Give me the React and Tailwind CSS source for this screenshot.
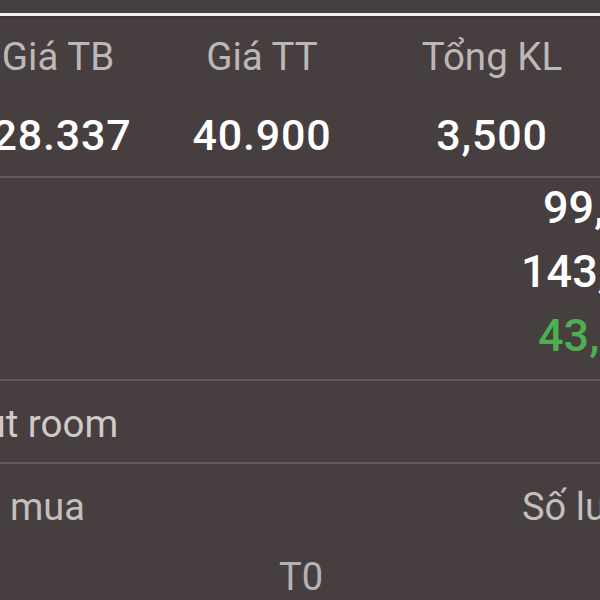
export default function App() {
  const font = { fontFamily: "Roboto, 'Noto Sans', sans-serif" };
  return (
    <div
      className="w-[600px] h-[600px] overflow-hidden bg-[#463e3f] relative"
      style={font}
    >
      <div className="h-[13px]" />
      <div className="h-[3px] bg-[#f2f0f0]" />
      <div className="h-[3px] bg-[#3f3838]" />
      {/* header */}
      <div className="flex mt-[16px] text-[38.5px] leading-[44px] text-[#bdb8b8] whitespace-nowrap">
        <div className="w-[116px] shrink-0 flex justify-center">Giá TB</div>
        <div className="w-[292px] shrink-0 flex justify-center">Giá TT</div>
        <div className="w-[168px] shrink-0 flex justify-center">Tổng KL</div>
      </div>
      <div className="flex mt-[31px] text-[43px] leading-[50px] tracking-[0.8px] font-medium text-white whitespace-nowrap">
        <div className="w-[124px] shrink-0 flex justify-center">28.337</div>
        <div className="w-[276px] shrink-0 flex justify-center">40.900</div>
        <div className="w-[184px] shrink-0 flex justify-center">3,500</div>
      </div>
      <div className="mt-[16px] h-[2px] bg-[#615a5a]" />
      <div className="mt-[3px] flex flex-col gap-[10px] text-[45px] leading-[54px] font-medium whitespace-nowrap">
        <div className="pl-[543px] text-white">99,000,000</div>
        <div className="pl-[521px] text-white">143,000,000</div>
        <div className="pl-[538px] text-[#4caf50]">43,000,000</div>
      </div>
      <div className="mt-[16px] h-[2px] bg-[#615a5a]" />
      <div className="mt-[21px] text-[38.5px] leading-[44px] text-[#cfcaca] whitespace-nowrap ml-[-42px]">
        Out room
      </div>
      <div className="mt-[16px] h-[2px] bg-[#615a5a]" />
      <div className="mt-[21px] flex text-[38px] leading-[44px] text-[#c4bfbf] whitespace-nowrap">
        <div className="w-[522px] shrink-0 pl-[10px]">mua</div>
        <div className="shrink-0">Số lượng</div>
      </div>
      <div className="mt-[26px] flex text-[38px] leading-[44px] text-[#b8b3b3] whitespace-nowrap">
        <div className="pl-[279px]">T0</div>
      </div>
    </div>
  );
}
